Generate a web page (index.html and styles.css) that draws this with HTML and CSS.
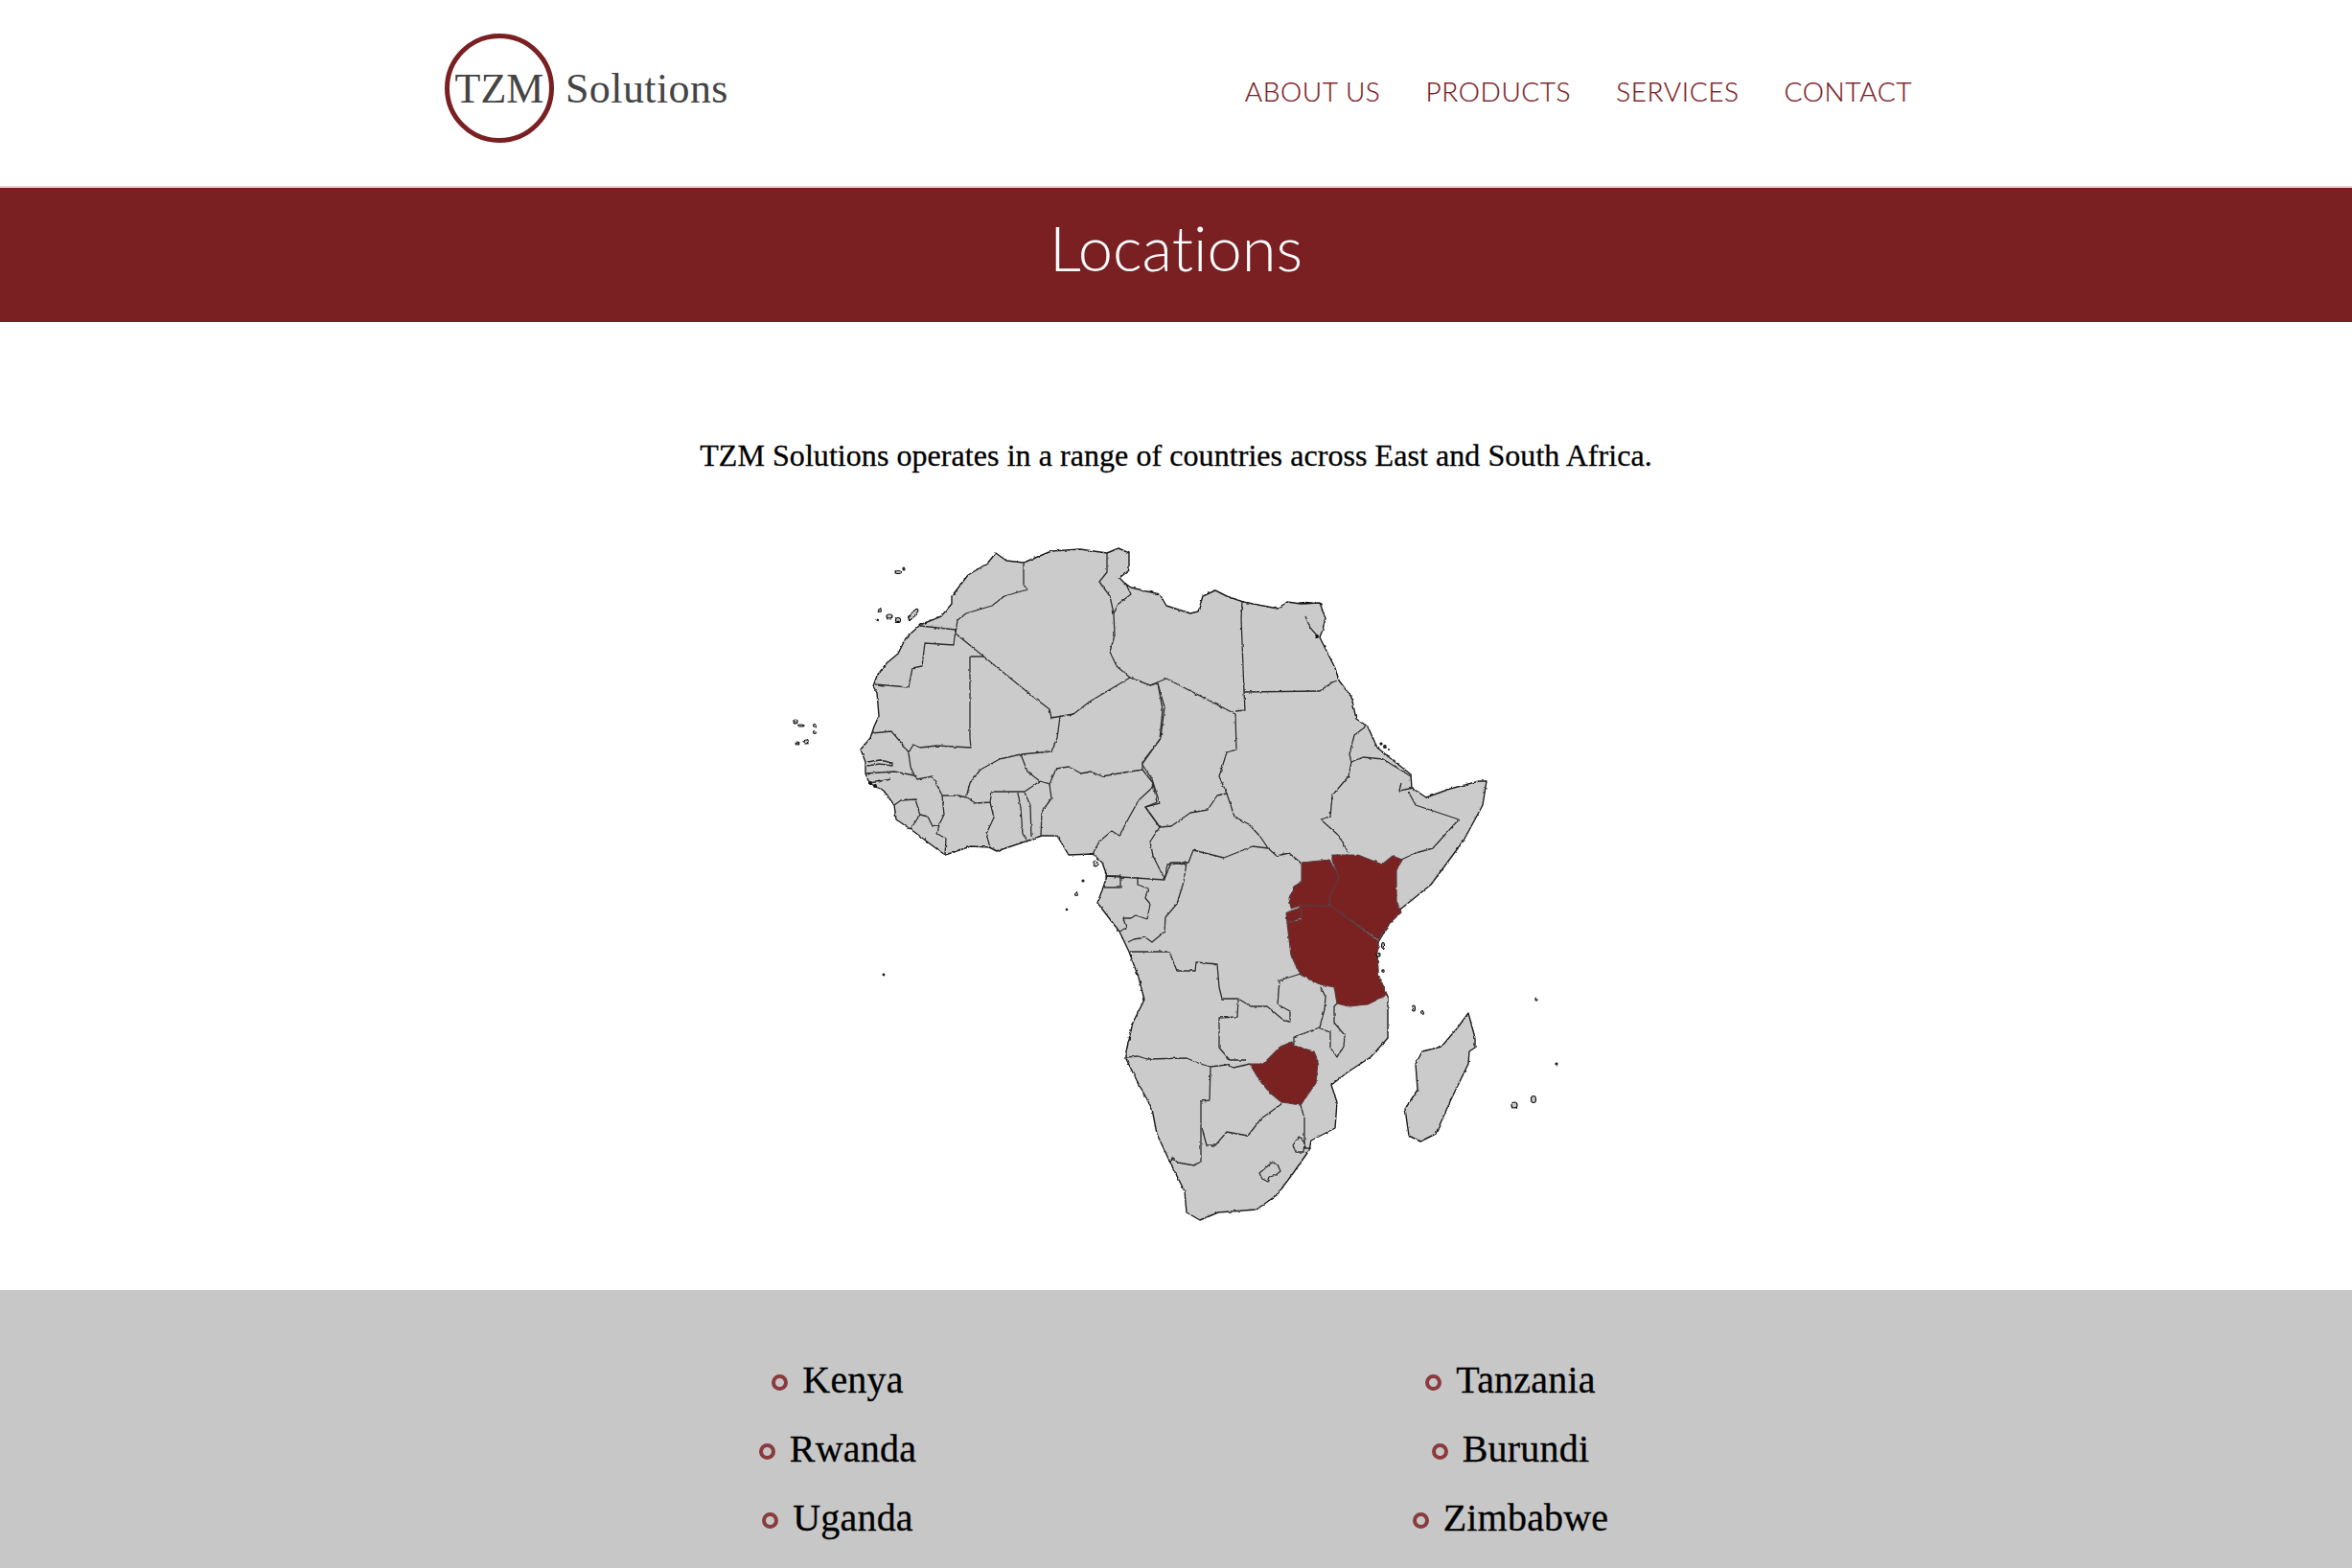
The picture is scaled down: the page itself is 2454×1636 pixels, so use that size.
FILE: index.html
```html
<!DOCTYPE html>
<html lang="en">
<head>
    <meta charset="UTF-8">
    <meta name="viewport" content="width=device-width, initial-scale=1.0">
    <title>TZM Solutions - Locations</title>
    <link rel="stylesheet" href="styles.css">
</head>
<body>
    <header class="site-header">
        <div class="header-inner">
            <a class="logo" href="#">
                <span class="logo-ring">TZM</span>
                <span class="logo-name">Solutions</span>
            </a>
            <nav class="main-nav">
                <a href="#">ABOUT US</a>
                <a href="#">PRODUCTS</a>
                <a href="#">SERVICES</a>
                <a href="#">CONTACT</a>
            </nav>
        </div>
    </header>

    <div class="page-banner">
        <h1>Locations</h1>
    </div>

    <main class="locations">
        <p class="intro">TZM Solutions operates in a range of countries across East and South Africa.</p>

        <svg class="africa-map" viewBox="814 560 826 720" role="img" aria-label="Map of Africa">
            <defs>
                <filter id="rough" x="-5%" y="-5%" width="110%" height="110%">
                    <feTurbulence type="fractalNoise" baseFrequency="0.22" numOctaves="2" seed="4" result="noise"/>
                    <feDisplacementMap in="SourceGraphic" in2="noise" scale="2.6" xChannelSelector="R" yChannelSelector="G"/>
                    <feGaussianBlur stdDeviation="0.35"/>
                </filter>
            </defs>
            <g filter="url(#rough)">
                <!-- mainland -->
                <path class="land" d="M1039 577L1030 588 1010 600 1000 613 993 622 993 630 982 643 960 652 945 666 937 682 925 692 915 705 911 716 915 723 917 747 912 758 908 770 898 782 903 795 903 807 907 817 922 825 933 840 935 855 950 865 967 878 986 892 1013 883 1032 884 1040 888 1070 878 1087 872 1103 872 1115 892 1140 891 1150 900 1155 914 1152 923 1145 942 1168 972 1178 993 1188 1020 1194 1043 1182 1067 1175 1097 1175 1105 1186 1127 1202 1157 1207 1183 1221 1213 1236 1243 1238 1265 1252 1273 1271 1265 1311 1262 1332 1247 1350 1223 1366 1200 1368 1190 1393 1177 1395 1150 1389 1132 1407 1118 1430 1103 1448 1083 1448 1040 1438 1017 1437 997 1438 983 1450 963 1462 948 1493 923 1527 877 1547 840 1551 815 1543 815 1513 823 1488 832 1473 822 1472 808 1453 793 1437 780 1427 758 1415 750 1410 727 1397 710 1393 697 1377 665 1380 657 1383 645 1377 629 1357 630 1343 628 1333 635 1297 628 1280 622 1268 616 1255 622 1250 638 1242 640 1217 632 1210 620 1180 613 1173 608 1168 603 1178 595 1178 577 1167 572 1155 577 1127 573 1097 575 1068 587 1050 585Z"/>
                <!-- highlighted countries -->
                <path class="active" d="M1358 900L1387 897 1397 915 1387 937 1387 945 1357 945 1347 948 1345 937 1350 925 1358 920Z"/>
                <path class="active" d="M1390 892L1417 892 1442 902 1453 893 1463 897 1457 908 1457 940 1462 952 1450 963 1438 980 1388 945 1387 937 1397 915 1390 898Z"/>
                <path class="active" d="M1355 945L1388 945 1438 982 1437 997 1438 1017 1447 1038 1427 1048 1407 1050 1395 1047 1392 1030 1377 1027 1357 1017 1347 997 1343 963 1358 960 1358 950Z"/>
                <path class="active" d="M1342 952L1357 947 1358 958 1343 963Z"/>
                <path class="active" d="M1304 1110L1318 1110 1336 1092 1348 1087 1350 1091 1371 1097 1375 1107 1373 1130 1357 1153 1337 1150 1325 1140 1314 1127Z"/>
                <!-- borders -->
                <g class="borders">
                    <path d="M1068 587L1068 610 1072 615 1048 622 1035 632 1008 640 999 647 997 661"/>
                    <path d="M960 653L997 657 995 673 965 671 962 695 952 697 948 717 913 714"/>
                    <path d="M997 661L1078 727 1095 740 1097 749 1120 745 1137 732 1179 707"/>
                    <path d="M1027 685L1012 685 1012 770 1013 780 977 778 960 780 953 777 948 785 950 800 954 809"/>
                    <path d="M910 765L930 763 942 777 948 785"/>
                    <path d="M903 807L933 805 954 809 957 813 973 810 983 830 1000 830 1008 832 1012 817 1023 803 1043 792 1065 787 1097 784 1103 770 1106 748"/>
                    <path d="M905 795L918 793 931 796 931 799 918 797 905 799"/>
                    <path d="M907 817L930 813"/>
                    <path d="M1065 787L1072 805 1085 815 1095 818 1102 802 1115 800 1128 807 1138 805 1150 810 1167 807 1192 803 1192 795 1210 772 1213 740 1208 713 1200 715 1179 707"/>
                    <path d="M1155 577L1155 597 1147 607 1158 622 1162 640 1163 663 1158 680 1165 695 1179 707"/>
                    <path d="M1162 640L1167 630 1180 620 1174 608"/>
                    <path d="M1008 832L1018 838 1033 837 1035 826 1069 826 1085 815"/>
                    <path d="M1033 837L1037 853 1029 870 1033 884"/>
                    <path d="M1062 827L1065 843 1067 870 1071 876"/>
                    <path d="M1069 827L1075 840 1076 873"/>
                    <path d="M1095 818L1097 833 1087 847 1086 873"/>
                    <path d="M983 830L985 850 980 860 978 870 987 875 986 892"/>
                    <path d="M933 840L940 835 955 834 960 850 950 865"/>
                    <path d="M960 850L968 852 973 862 980 860"/>
                    <path d="M1192 803L1203 817 1202 822 1188 835 1178 853 1168 872 1160 867 1147 878 1140 891"/>
                    <path d="M1203 817L1207 837 1195 842 1208 860 1210 863"/>
                    <path d="M1179 707L1200 715 1217 708 1289 745"/>
                    <path d="M1208 713L1215 738 1211 770 1192 797"/>
                    <path d="M1289 745L1290 782 1280 785 1272 810 1280 828 1270 830 1260 845 1242 848 1222 862 1210 863 1195 842 1210 838 1202 813 1192 798"/>
                    <path d="M1296 628L1295 645 1298 722 1299 741 1289 742"/>
                    <path d="M1298 722L1377 721 1390 712 1395 710"/>
                    <path d="M1425 758L1413 767 1408 787 1410 795 1422 790 1443 792 1472 810"/>
                    <path d="M1462 817L1460 825 1475 822"/>
                    <path d="M1410 795L1407 810 1390 830 1388 852 1378 855 1397 872 1407 890"/>
                    <path d="M1470 827L1477 840 1522 855 1495 885 1477 890 1462 897"/>
                    <path d="M1280 828L1288 852 1303 860 1315 873 1323 885 1332 893 1345 890 1357 900"/>
                    <path d="M1323 885L1307 883 1277 895 1257 890 1245 887 1240 900 1222 900 1215 917"/>
                    <path d="M1210 863L1200 878 1203 893 1215 917"/>
                    <path d="M1154 914L1215 918 1218 902 1238 900 1235 920 1228 943 1216 957 1215 972 1202 983 1195 978 1183 980 1177 983"/>
                    <path d="M1153 914L1169 914 1169 926 1152 926"/>
                    <path d="M1187 915L1187 923 1198 927 1195 937 1200 943 1197 959 1185 955 1180 958 1172 958 1175 968 1168 972"/>
                    <path d="M1179 993L1220 993 1228 1013 1247 1013 1248 1004 1270 1006 1272 1030 1275 1042 1292 1042 1305 1050 1322 1050 1340 1065 1346 1066 1346 1055 1333 1048 1335 1023 1357 1016"/>
                    <path d="M1292 1042L1291 1061 1272 1062 1272 1093 1283 1106 1300 1106"/>
                    <path d="M1175 1103L1187 1102 1197 1105 1238 1104 1250 1109 1263 1113 1280 1111 1287 1114 1304 1110"/>
                    <path d="M1263 1113L1262 1148 1253 1149 1253 1212 1246 1216 1229 1213 1223 1208 1221 1213"/>
                    <path d="M1254 1177L1259 1195 1268 1195 1280 1181 1302 1185 1316 1167 1337 1152"/>
                    <path d="M1357 1153L1361 1167 1361 1198 1368 1198"/>
                    <path d="M1355 1186L1361 1192 1360 1202 1352 1202 1349 1195Z"/>
                    <path d="M1327 1213L1333 1215 1336 1222 1331 1226 1325 1228 1323 1233 1317 1230 1314 1224 1321 1218Z"/>
                    <path d="M1350 1090L1350 1082 1377 1072 1382 1053 1383 1040 1378 1030"/>
                    <path d="M1375 1072L1388 1077 1388 1093 1395 1103 1402 1092 1403 1080 1392 1067 1392 1050 1395 1047"/>
                    <path d="M1362 643L1367 655 1375 664"/>
                </g>
                <!-- Madagascar and the small islands -->
                <path class="land" d="M1532 1057L1539 1083 1539 1093 1533 1097 1532 1110 1514 1147 1498 1183 1482 1191 1470 1185 1466 1157 1479 1137 1477 1110 1484 1097 1504 1092 1521 1072Z"/>
                <g class="islands">
                    <ellipse cx="1475" cy="1052" rx="1.5" ry="3"/>
                    <circle cx="1484" cy="1057" r="1.5"/>
                    <circle cx="1580" cy="1153" r="3"/>
                    <ellipse cx="1600" cy="1147" rx="2.5" ry="3.5"/>
                    <circle cx="1603" cy="1043" r="1"/>
                    <circle cx="1624" cy="1110" r="1"/>
                    <circle cx="918" cy="637" r="1.5"/>
                    <ellipse cx="928" cy="643" rx="3" ry="2"/>
                    <circle cx="937" cy="647" r="2.5"/>
                    <ellipse cx="953" cy="641" rx="2" ry="7" transform="rotate(40 953 641)"/>
                    <circle cx="915" cy="647" r="1"/>
                    <ellipse cx="937" cy="597" rx="3" ry="1.5"/>
                    <circle cx="943" cy="594" r="1"/>
                    <circle cx="830" cy="753" r="2"/>
                    <ellipse cx="836" cy="757" rx="3" ry="1"/>
                    <circle cx="850" cy="757" r="1.5"/>
                    <circle cx="850" cy="764" r="1.5"/>
                    <circle cx="841" cy="774" r="2"/>
                    <ellipse cx="832" cy="776" rx="2" ry="1"/>
                    <ellipse cx="1143" cy="901" rx="2" ry="3"/>
                    <circle cx="1130" cy="919" r="1"/>
                    <circle cx="1123" cy="933" r="1.5"/>
                    <circle cx="1113" cy="949" r="0.7"/>
                    <circle cx="922" cy="1017" r="0.8"/>
                    <ellipse cx="1443" cy="987" rx="1.5" ry="3.5"/>
                    <circle cx="1438" cy="996" r="2"/>
                    <circle cx="1443" cy="1013" r="1.2"/>
                </g>
                <g class="specks">
                    <ellipse cx="1362" cy="629" rx="8" ry="1.2"/>
                    <circle cx="1441" cy="776" r="1.6"/>
                    <circle cx="1445" cy="779" r="2"/>
                    <circle cx="1449" cy="782" r="1"/>
                    <circle cx="1438" cy="780" r="1.2"/>
                    <circle cx="908" cy="817" r="2"/>
                    <circle cx="913" cy="820" r="2"/>
                    <circle cx="917" cy="815" r="1.6"/>
                    <circle cx="1374" cy="664" r="2"/>
                </g>
            </g>
        </svg>
    </main>

    <section class="country-band">
        <ul class="country-grid">
            <li>Kenya</li>
            <li>Tanzania</li>
            <li>Rwanda</li>
            <li>Burundi</li>
            <li>Uganda</li>
            <li>Zimbabwe</li>
        </ul>
    </section>
</body>
</html>
```

FILE: styles.css
```css
body {
    margin: 0;
    background-color: #ffffff;
    color: #000000;
    font-family: "Liberation Serif", serif;
}

.site-header {
    height: 194px;
    border-bottom: 2px solid #e6d4d5;
}

.header-inner {
    display: flex;
    justify-content: space-between;
    align-items: flex-start;
    width: 1531px;
    margin-left: 464px;
    padding-top: 35px;
}

.logo {
    display: flex;
    align-items: center;
    gap: 12px;
    color: #444444;
    text-decoration: none;
    font-size: 44px;
}

.logo-ring {
    display: flex;
    justify-content: center;
    align-items: center;
    width: 104px;
    height: 104px;
    border: 5px solid #7a2023;
    border-radius: 50%;
}

.logo-name {
    letter-spacing: 0.4px;
}

.main-nav {
    display: flex;
    gap: 47px;
    padding-top: 43px;
    font-family: Lato, sans-serif;
    font-weight: 300;
    font-size: 28px;
    letter-spacing: 0.6px;
    -webkit-text-stroke: 0.2px #7a2023;
}

.main-nav a {
    color: #7a2023;
    text-decoration: none;
}

.page-banner {
    height: 140px;
    background-color: #7a2023;
    color: #ffffff;
    text-align: center;
}

.page-banner h1 {
    margin: 0;
    padding-top: 25px;
    font-family: Lato, sans-serif;
    font-weight: 300;
    font-size: 65px;
    line-height: 74px;
    font-variant-ligatures: none;
}

.locations {
    height: 1010px;
    box-sizing: border-box;
    padding-top: 109px;
    text-align: center;
}

.intro {
    margin: 0 0 55px;
    font-size: 32px;
    line-height: 60px;
    letter-spacing: 0.06px;
    -webkit-text-stroke: 0.3px #000000;
}

.africa-map {
    display: block;
    width: 826px;
    height: 720px;
    margin: 0 auto;
}

.land {
    fill: #cbcbcb;
    stroke: #1c1c1c;
    stroke-width: 1.4;
    stroke-linejoin: round;
}

.active {
    fill: #7a2023;
    stroke: #5e3a3c;
    stroke-width: 1.2;
    stroke-linejoin: round;
}

.borders path {
    fill: none;
    stroke: #2e2e2e;
    stroke-width: 1.3;
    stroke-linejoin: round;
}

.islands {
    fill: #cbcbcb;
    stroke: #111111;
    stroke-width: 1.2;
}

.specks {
    fill: #111111;
}

.country-band {
    height: 290px;
    background-color: #c7c7c7;
}

.country-grid {
    display: grid;
    grid-template-columns: 1fr 1fr;
    row-gap: 26px;
    justify-items: center;
    width: 1404px;
    margin: 0 auto;
    padding: 71px 4px 0 0;
    list-style: none;
    font-size: 40px;
    line-height: 46px;
    letter-spacing: 0.2px;
    -webkit-text-stroke: 0.3px #000000;
}

.country-grid li {
    display: flex;
    align-items: center;
    gap: 15px;
}

.country-grid li::before {
    content: "";
    width: 9px;
    height: 9px;
    margin-top: 4px;
    border: 4px solid #8a3b3e;
    border-radius: 50%;
}
```
